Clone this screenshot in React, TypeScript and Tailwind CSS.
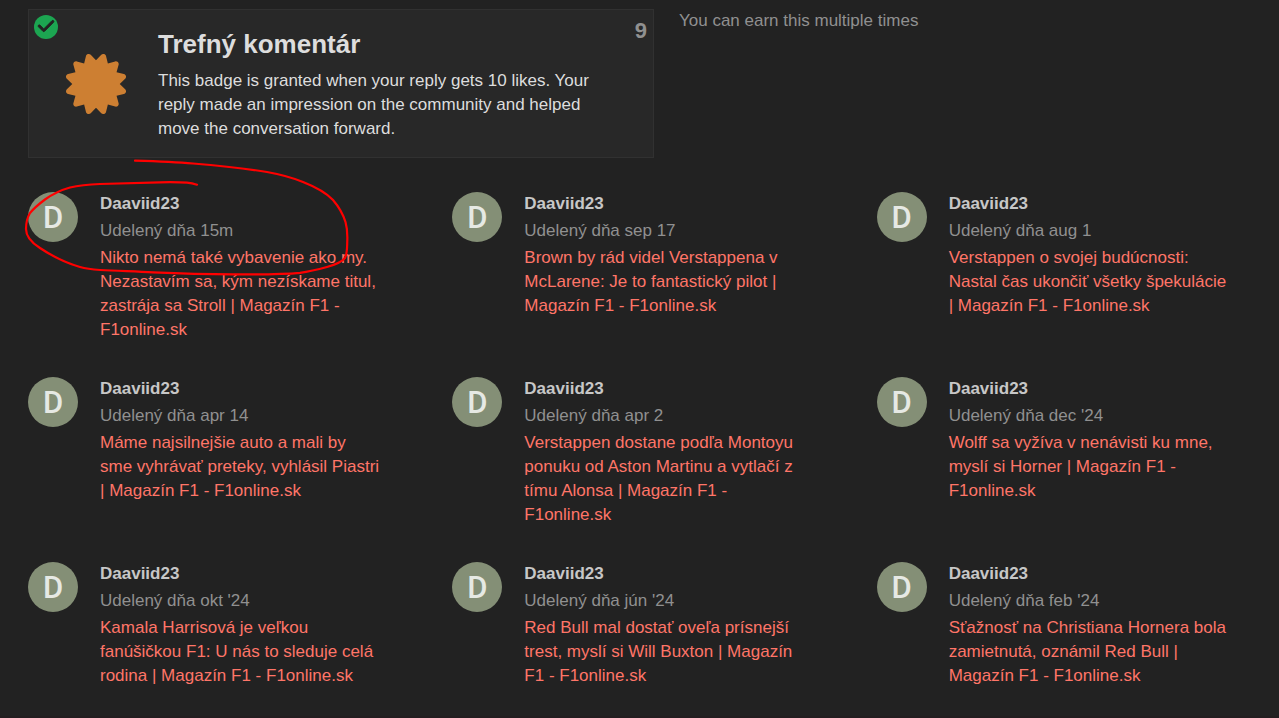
import React from 'react';
import { FaCertificate, FaCheck } from 'react-icons/fa6';

interface Grant {
  date: string;
  title: string;
}

const USERNAME = 'Daaviid23';

const GRANTS: Grant[] = [
  { date: '15m', title: 'Nikto nemá také vybavenie ako my. Nezastavím sa, kým nezískame titul, zastrája sa Stroll | Magazín F1 - F1online.sk' },
  { date: 'sep 17', title: 'Brown by rád videl Verstappena v McLarene: Je to fantastický pilot | Magazín F1 - F1online.sk' },
  { date: 'aug 1', title: 'Verstappen o svojej budúcnosti: Nastal čas ukončiť všetky špekulácie | Magazín F1 - F1online.sk' },
  { date: 'apr 14', title: 'Máme najsilnejšie auto a mali by sme vyhrávať preteky, vyhlásil Piastri | Magazín F1 - F1online.sk' },
  { date: 'apr 2', title: 'Verstappen dostane podľa Montoyu ponuku od Aston Martinu a vytlačí z tímu Alonsa | Magazín F1 - F1online.sk' },
  { date: "dec '24", title: 'Wolff sa vyžíva v nenávisti ku mne, myslí si Horner | Magazín F1 - F1online.sk' },
  { date: "okt '24", title: 'Kamala Harrisová je veľkou fanúšičkou F1: U nás to sleduje celá rodina | Magazín F1 - F1online.sk' },
  { date: "jún '24", title: 'Red Bull mal dostať oveľa prísnejší trest, myslí si Will Buxton | Magazín F1 - F1online.sk' },
  { date: "feb '24", title: 'Sťažnosť na Christiana Hornera bola zamietnutá, oznámil Red Bull | Magazín F1 - F1online.sk' },
];

const BadgeCard: React.FC = () => (
  <section className="relative flex w-[626px] items-center border border-[#313131] bg-[#282828] pt-[17px] pr-9 pb-4 pl-[37px]">
    <span className="absolute top-[5px] left-[5px] flex size-6 items-center justify-center rounded-full bg-[#1ca551] pb-0.5 text-[#222222]">
      <FaCheck size={18} stroke="currentColor" strokeWidth={28} />
    </span>
    <FaCertificate size={60} className="shrink-0 text-[#cd7f32]" />
    <div className="ml-8">
      <h1 className="mb-2 text-[26px] leading-[34px] font-bold text-[#dddddd]">Trefný komentár</h1>
      <p className="text-[17px] leading-6 text-[#dddddd]">
        This badge is granted when your reply gets 10 likes. Your reply made an impression on the community and helped
        move the conversation forward.
      </p>
    </div>
    <span className="absolute top-[5px] right-[6px] text-[22px] leading-8 font-bold text-[#909090]">9</span>
  </section>
);

const GrantItem: React.FC<{ grant: Grant }> = ({ grant }) => (
  <li className="flex gap-[22px] pr-5">
    <a
      href="#user"
      aria-label={USERNAME}
      className="flex size-[50px] shrink-0 items-center justify-center rounded-full bg-[#848f76] font-[Roboto,sans-serif] text-[31px] leading-none font-medium text-[#e6e9e4]"
    >
      D
    </a>
    <div className="text-[17px] leading-6">
      <a href="#user" className="mb-[3px] block font-bold text-[#c7c7c7]">{USERNAME}</a>
      <p className="mb-[3px] text-[#909090]">Udelený dňa {grant.date}</p>
      <a href="#post" className="block text-[#ff7568]">{grant.title}</a>
    </div>
  </li>
);

// Hand-drawn loop around the newest grant
const Scribble: React.FC = () => (
  <svg
    className="pointer-events-none absolute top-0 left-0"
    width="360"
    height="290"
    fill="none"
    stroke="#ff0000"
    strokeWidth="2.2"
    strokeLinecap="round"
    aria-hidden="true"
  >
    <path d="M135 160.7C155 161.3 175 162 193 163.5C218 165.5 243 168 267 172C281 174.5 292 177.5 303 182C317 187.5 326 192.5 333 200C339 207 343 214 345.5 222C347.5 229 347.5 234 347.3 240C347 247 347.5 253 345 258C341 263 334 265 327 267C318 269.5 310 271.5 300 272.8C278 274.8 255 274.3 233 274.3C206 274.3 180 273.6 153 272.4C135 271.4 118 271 100 270C93 269.5 86 268.7 80 267C66 263 52 256 40 248C32 243 26 237 26 229C26 223 27 218 30 213C34 208 39 204 45 199.5C52 194.5 61 190 70 187.5C80 185 90 184.3 100 184C120 183.4 140 182.8 160 182.3C170 182.1 179 182.1 187 182.7C191 183 194 183.7 197 184.7" />
  </svg>
);

export default function App() {
  return (
    <div className="relative flex min-h-screen flex-col bg-[#222222] font-['Liberation_Sans',Arial,sans-serif]">
      <main className="flex-1 px-7 pt-[9px]">
        <div className="flex items-start gap-[25px]">
          <BadgeCard />
          <p className="text-[17px] leading-6 text-[#909090]">You can earn this multiple times</p>
        </div>
        <ul className="mt-[34px] grid grid-cols-3 gap-x-[50px] gap-y-[35px]">
          {GRANTS.map((grant) => (
            <GrantItem key={grant.date} grant={grant} />
          ))}
        </ul>
      </main>
      <div className="h-0.5 bg-[#231e20]" />
      <Scribble />
    </div>
  );
}
